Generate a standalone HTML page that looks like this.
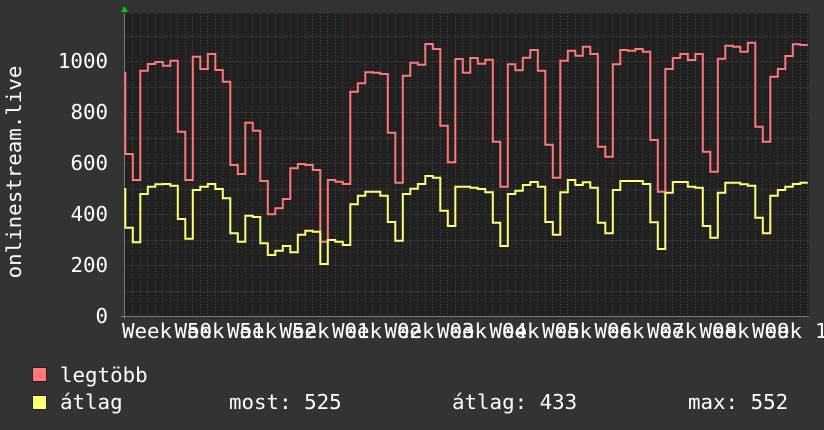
<!DOCTYPE html>
<html><head><meta charset="utf-8"><style>
html,body{margin:0;padding:0;background:#333;}
svg{display:block;}
text{font-family:"DejaVu Sans Mono","Liberation Mono",monospace;font-size:20.8px;fill:#fff;}
</style></head><body>
<svg width="824" height="430" viewBox="0 0 824 430" xmlns="http://www.w3.org/2000/svg">
<rect width="824" height="430" fill="#333"/>
<rect x="124" y="13" width="685" height="303" fill="#212121"/>
<g stroke="#4a4a4a" stroke-width="1" stroke-dasharray="1,2">
<path d="M124.5,36.5H809M124.5,87.5H809M124.5,138.5H809M124.5,189.5H809M124.5,240.5H809M124.5,291.5H809"/>
<path d="M132.5,13V316M147.5,13V316M155.5,13V316M162.5,13V316M170.5,13V316M177.5,13V316M185.5,13V316M200.5,13V316M207.5,13V316M215.5,13V316M222.5,13V316M230.5,13V316M237.5,13V316M252.5,13V316M260.5,13V316M267.5,13V316M275.5,13V316M282.5,13V316M290.5,13V316M305.5,13V316M312.5,13V316M320.5,13V316M327.5,13V316M335.5,13V316M342.5,13V316M357.5,13V316M365.5,13V316M372.5,13V316M380.5,13V316M387.5,13V316M395.5,13V316M410.5,13V316M417.5,13V316M425.5,13V316M432.5,13V316M440.5,13V316M447.5,13V316M462.5,13V316M470.5,13V316M477.5,13V316M485.5,13V316M492.5,13V316M500.5,13V316M515.5,13V316M522.5,13V316M530.5,13V316M537.5,13V316M545.5,13V316M552.5,13V316M567.5,13V316M575.5,13V316M582.5,13V316M590.5,13V316M597.5,13V316M605.5,13V316M620.5,13V316M627.5,13V316M635.5,13V316M642.5,13V316M650.5,13V316M657.5,13V316M672.5,13V316M680.5,13V316M687.5,13V316M695.5,13V316M702.5,13V316M710.5,13V316M725.5,13V316M732.5,13V316M740.5,13V316M747.5,13V316M755.5,13V316M762.5,13V316M777.5,13V316M785.5,13V316M792.5,13V316M800.5,13V316M807.5,13V316"/>
</g>
<g stroke="#6a3a3a" stroke-width="1" stroke-dasharray="1,2">
<path d="M124.5,61.5H809M124.5,112.5H809M124.5,163.5H809M124.5,214.5H809M124.5,265.5H809"/>
<path d="M140.5,13V316M192.5,13V316M245.5,13V316M297.5,13V316M350.5,13V316M402.5,13V316M455.5,13V316M507.5,13V316M560.5,13V316M612.5,13V316M665.5,13V316M717.5,13V316M770.5,13V316"/>
</g>
<path d="M121,316.5H809M124.5,13V319" stroke="#777" stroke-width="1"/>
<path d="M121,12L124.5,6L128,12Z" fill="#0c0"/>
<path fill="none" stroke="#ff7777" stroke-width="2" d="M125.3,71.7 V154h7.5V180h7.5V70.7h7.5V64h7.5V62h7.5V65.7h7.5V60.7h7.5V131.7h7.5V180h7.5V56.7h7.5V69h7.5V54h7.5V70h7.5V81.7h7.5V165h7.5V174h7.5V122.7h7.5V130.7h7.5V181h7.5V214.3h7.5V208.3h7.5V199h7.5V168.3h7.5V164h7.5V165h7.5V170h7.5V241.7h7.5V180h7.5V181.7h7.5V184h7.5V91.7h7.5V83.3h7.5V72.3h7.5V72.7h7.5V74h7.5V132.7h7.5V182.7h7.5V75.7h7.5V62.7h7.5V64.7h7.5V44h7.5V49h7.5V125.7h7.5V162.3h7.5V59h7.5V72.7h7.5V58h7.5V63.7h7.5V59.7h7.5V141.7h7.5V186.7h7.5V64.3h7.5V70.3h7.5V57.7h7.5V50h7.5V70.7h7.5V144.7h7.5V177.7h7.5V60.7h7.5V50.7h7.5V55.7h7.5V46.7h7.5V54h7.5V146.7h7.5V156.7h7.5V64.3h7.5V50h7.5V50.7h7.5V49h7.5V51.7h7.5V140h7.5V191.7h7.5V69h7.5V58h7.5V54h7.5V60h7.5V54h7.5V151.7h7.5V171.7h7.5V58.7h7.5V45.7h7.5V46.7h7.5V51.7h7.5V42.7h7.5V126.7h7.5V141.7h7.5V76.7h7.5V69h7.5V56h7.5V44.3h7.5V45h7.5"/>
<path fill="none" stroke="#ffff77" stroke-width="2" d="M125.3,188 V227.7h7.5V242.3h7.5V194h7.5V186.7h7.5V184.3h7.5V184h7.5V185.7h7.5V219h7.5V238.7h7.5V190h7.5V186.7h7.5V184h7.5V189h7.5V198.3h7.5V233.3h7.5V241.7h7.5V215.7h7.5V217h7.5V243.3h7.5V255h7.5V250.7h7.5V246h7.5V252.3h7.5V234.7h7.5V230.7h7.5V231.7h7.5V264h7.5V240h7.5V241.7h7.5V245h7.5V204.3h7.5V195.7h7.5V191.7h7.5V191.7h7.5V195.7h7.5V222h7.5V240.7h7.5V194h7.5V188.7h7.5V184h7.5V176h7.5V177.7h7.5V210.7h7.5V226h7.5V186.7h7.5V186.7h7.5V187.7h7.5V189h7.5V192.3h7.5V222.7h7.5V246h7.5V194h7.5V190.7h7.5V185h7.5V182h7.5V186.7h7.5V222h7.5V234.7h7.5V192.3h7.5V180h7.5V185h7.5V182.3h7.5V187.7h7.5V222.7h7.5V233.3h7.5V190h7.5V181h7.5V181h7.5V181h7.5V184h7.5V222.3h7.5V249h7.5V192.7h7.5V182h7.5V182h7.5V186.7h7.5V187.7h7.5V226h7.5V237.7h7.5V192.7h7.5V182.7h7.5V182.7h7.5V184.3h7.5V185.7h7.5V217.7h7.5V233.3h7.5V195.7h7.5V190h7.5V186.7h7.5V184h7.5V182.7h7.5"/>
<g text-anchor="end">
<text x="108" y="68">1000</text>
<text x="108" y="119">800</text>
<text x="108" y="170">600</text>
<text x="108" y="221">400</text>
<text x="108" y="272">200</text>
<text x="108" y="323">0</text>
</g>
<text transform="translate(21,172) rotate(-90)" text-anchor="middle">onlinestream.live</text>
<g>
<text x="122" y="338">Week</text><text x="187" y="338">50</text>
<text x="174.5" y="338">Week</text><text x="239.5" y="338">51</text>
<text x="227" y="338">Week</text><text x="292" y="338">52</text>
<text x="279.5" y="338">Week</text><text x="344.5" y="338">01</text>
<text x="332" y="338">Week</text><text x="397" y="338">02</text>
<text x="384.5" y="338">Week</text><text x="449.5" y="338">03</text>
<text x="437" y="338">Week</text><text x="502" y="338">04</text>
<text x="489.5" y="338">Week</text><text x="554.5" y="338">05</text>
<text x="542" y="338">Week</text><text x="607" y="338">06</text>
<text x="594.5" y="338">Week</text><text x="659.5" y="338">07</text>
<text x="647" y="338">Week</text><text x="712" y="338">08</text>
<text x="699.5" y="338">Week</text><text x="764.5" y="338">09</text>
<text x="752" y="338">Week</text><text x="815" y="338">10</text>
</g>
<rect x="32.5" y="367.5" width="14" height="14" fill="#ff7777" stroke="#222"/>
<rect x="32.5" y="395.5" width="14" height="14" fill="#ffff77" stroke="#222"/>
<text x="60" y="382">legtöbb</text>
<text x="60" y="409">átlag</text>
<text x="229" y="409">most: 525</text>
<text x="452" y="409">átlag: 433</text>
<text x="688" y="409">max: 552</text>
</svg>
</body></html>
